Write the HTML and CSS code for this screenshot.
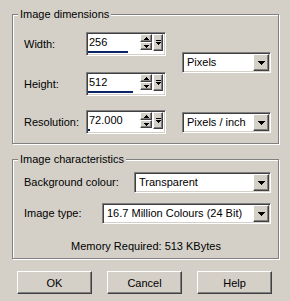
FILE: index.html
```html
<!DOCTYPE html>
<html>
<head>
    <title>New Image</title>
    <link rel="stylesheet" href="styles.css">
</head>
<body>
    <div class="dialog">
        <fieldset class="group">
            <legend>Image dimensions</legend>
            <div class="dims">
                <div class="dims-fields">
                    <div class="field">
                        <span class="label">Width:</span>
                        <div class="spin">
                            <div class="spin-top">
                                <span class="spin-value">256</span>
                                <div class="spin-arrows">
                                    <span class="btn arrow"><svg width="5" height="3"><path d="M2 0h1v1h1v1h1v1h-5v-1h1v-1h1z"/></svg></span>
                                    <span class="btn arrow"><svg width="5" height="3"><path d="M0 0h5v1h-1v1h-1v1h-1v-1h-1v-1h-1z"/></svg></span>
                                </div>
                                <span class="btn slide"><svg width="5" height="6"><path d="M0 0h5v1h-5z M0 2h5v1h-1v1h-1v1h-1v-1h-1v-1h-1z"/></svg></span>
                            </div>
                            <div class="spin-track"><div class="spin-fill" style="width: 40px"></div></div>
                        </div>
                    </div>
                    <div class="field field-height">
                        <span class="label">Height:</span>
                        <div class="spin">
                            <div class="spin-top">
                                <span class="spin-value">512</span>
                                <div class="spin-arrows">
                                    <span class="btn arrow"><svg width="5" height="3"><path d="M2 0h1v1h1v1h1v1h-5v-1h1v-1h1z"/></svg></span>
                                    <span class="btn arrow"><svg width="5" height="3"><path d="M0 0h5v1h-1v1h-1v1h-1v-1h-1v-1h-1z"/></svg></span>
                                </div>
                                <span class="btn slide"><svg width="5" height="6"><path d="M0 0h5v1h-5z M0 2h5v1h-1v1h-1v1h-1v-1h-1v-1h-1z"/></svg></span>
                            </div>
                            <div class="spin-track"><div class="spin-fill" style="width: 45px"></div></div>
                        </div>
                    </div>
                    <div class="field field-res">
                        <span class="label">Resolution:</span>
                        <div class="spin">
                            <div class="spin-top">
                                <span class="spin-value">72.000</span>
                                <div class="spin-arrows">
                                    <span class="btn arrow"><svg width="5" height="3"><path d="M2 0h1v1h1v1h1v1h-5v-1h1v-1h1z"/></svg></span>
                                    <span class="btn arrow"><svg width="5" height="3"><path d="M0 0h5v1h-1v1h-1v1h-1v-1h-1v-1h-1z"/></svg></span>
                                </div>
                                <span class="btn slide"><svg width="5" height="6"><path d="M0 0h5v1h-5z M0 2h5v1h-1v1h-1v1h-1v-1h-1v-1h-1z"/></svg></span>
                            </div>
                            <div class="spin-track"><div class="spin-fill" style="width: 2px"></div></div>
                        </div>
                    </div>
                </div>
                <div class="dims-units">
                    <div class="combo combo-units">
                        <span class="combo-text">Pixels</span>
                        <span class="btn drop"><svg width="7" height="4"><path d="M0 0h7v1h-1v1h-1v1h-1v1h-1v-1h-1v-1h-1v-1h-1z"/></svg></span>
                    </div>
                    <div class="combo combo-units combo-res">
                        <span class="combo-text">Pixels / inch</span>
                        <span class="btn drop"><svg width="7" height="4"><path d="M0 0h7v1h-1v1h-1v1h-1v1h-1v-1h-1v-1h-1v-1h-1z"/></svg></span>
                    </div>
                </div>
            </div>
        </fieldset>

        <fieldset class="group group-chars">
            <legend>Image characteristics</legend>
            <div class="chars">
                <div class="char-row">
                    <span class="label">Background colour:</span>
                    <div class="combo combo-bg">
                        <span class="combo-text">Transparent</span>
                        <span class="btn drop"><svg width="7" height="4"><path d="M0 0h7v1h-1v1h-1v1h-1v1h-1v-1h-1v-1h-1v-1h-1z"/></svg></span>
                    </div>
                </div>
                <div class="char-row char-row-type">
                    <span class="label">Image type:</span>
                    <div class="combo combo-type">
                        <span class="combo-text">16.7 Million Colours (24 Bit)</span>
                        <span class="btn drop"><svg width="7" height="4"><path d="M0 0h7v1h-1v1h-1v1h-1v1h-1v-1h-1v-1h-1v-1h-1z"/></svg></span>
                    </div>
                </div>
                <p class="memory">Memory Required: 513 KBytes</p>
            </div>
        </fieldset>

        <div class="buttons">
            <button type="button" class="btn push">OK</button>
            <button type="button" class="btn push">Cancel</button>
            <button type="button" class="btn push">Help</button>
        </div>
    </div>
</body>
</html>
```

FILE: styles.css
```css
body {
    margin: 0;
    background-color: #d4d0c8;
    font-family: "Liberation Sans", Arial, sans-serif;
    font-size: 11px;
    line-height: 13px;
    color: #000;
}

.dialog {
    width: 267px;
    padding: 8px 0 0 12px;
}

/* etched group box */
.group {
    margin: 0;
    padding: 0;
    min-width: 0;
    border: 1px solid #808080;
    box-shadow: inset 1px 1px 0 #fff, 1px 1px 0 #fff;
}

.group legend {
    margin-left: 5px;
    padding: 0 2px;
    background-color: #d4d0c8;
    line-height: 13px;
}

.group-chars {
    margin-top: 9px;
}

.dims {
    display: flex;
    align-items: flex-start;
    padding: 11px 0 9px 11px;
}

.field {
    display: flex;
    align-items: center;
    height: 24px;
}

.field-height {
    margin-top: 16px;
}

.field-res {
    margin-top: 14px;
}

.field .label {
    width: 62px;
}

/* raised button face */
.btn {
    box-sizing: border-box;
    display: flex;
    align-items: center;
    justify-content: center;
    background-color: #d4d0c8;
    border: 1px solid;
    border-color: #fff #404040 #404040 #fff;
    box-shadow: inset -1px -1px 0 #808080;
}

.btn svg {
    display: block;
}

/* sunken field */
.spin,
.combo {
    box-sizing: border-box;
    background-color: #fff;
    border: 1px solid;
    border-color: #808080 #fff #fff #808080;
    box-shadow: inset 1px 1px 0 #404040, inset -1px -1px 0 #d4d0c8;
    padding: 1px;
}

.spin {
    width: 80px;
    height: 24px;
}

.spin-top {
    display: flex;
    height: 17px;
    padding-right: 1px;
}

.spin-value {
    flex: 1;
    padding-left: 1px;
    line-height: 16px;
}

.spin-arrows {
    display: flex;
    flex-direction: column;
    width: 12px;
    margin-right: 1px;
}

.spin-arrows .arrow {
    height: 8px;
}

.slide {
    width: 10px;
    height: 17px;
}

.spin-track {
    height: 2px;
}

.spin-fill {
    height: 2px;
    background-color: #0a246a;
}

.dims-units {
    margin-left: 16px;
    padding-top: 20px;
}

.combo {
    display: flex;
    align-items: center;
    height: 21px;
}

.combo-units {
    width: 89px;
}

.combo-res {
    margin-top: 39px;
}

.combo-bg {
    width: 137px;
}

.combo-type {
    width: 169px;
}

.combo-text {
    flex: 1;
    padding-left: 3px;
    white-space: nowrap;
    overflow: hidden;
}

.drop {
    width: 16px;
    height: 17px;
}

.chars {
    padding: 6px 7px 5px 11px;
}

.char-row {
    display: flex;
    justify-content: space-between;
    align-items: center;
}

.char-row-type {
    margin-top: 10px;
}

.memory {
    margin: 16px 0 0;
    padding-right: 3px;
    text-align: center;
}

.buttons {
    display: flex;
    gap: 15px;
    margin-top: 12px;
    padding-left: 5px;
}

.push {
    width: 75px;
    height: 23px;
    padding: 0;
    font-family: inherit;
    font-size: 11px;
    color: #000;
}
```
